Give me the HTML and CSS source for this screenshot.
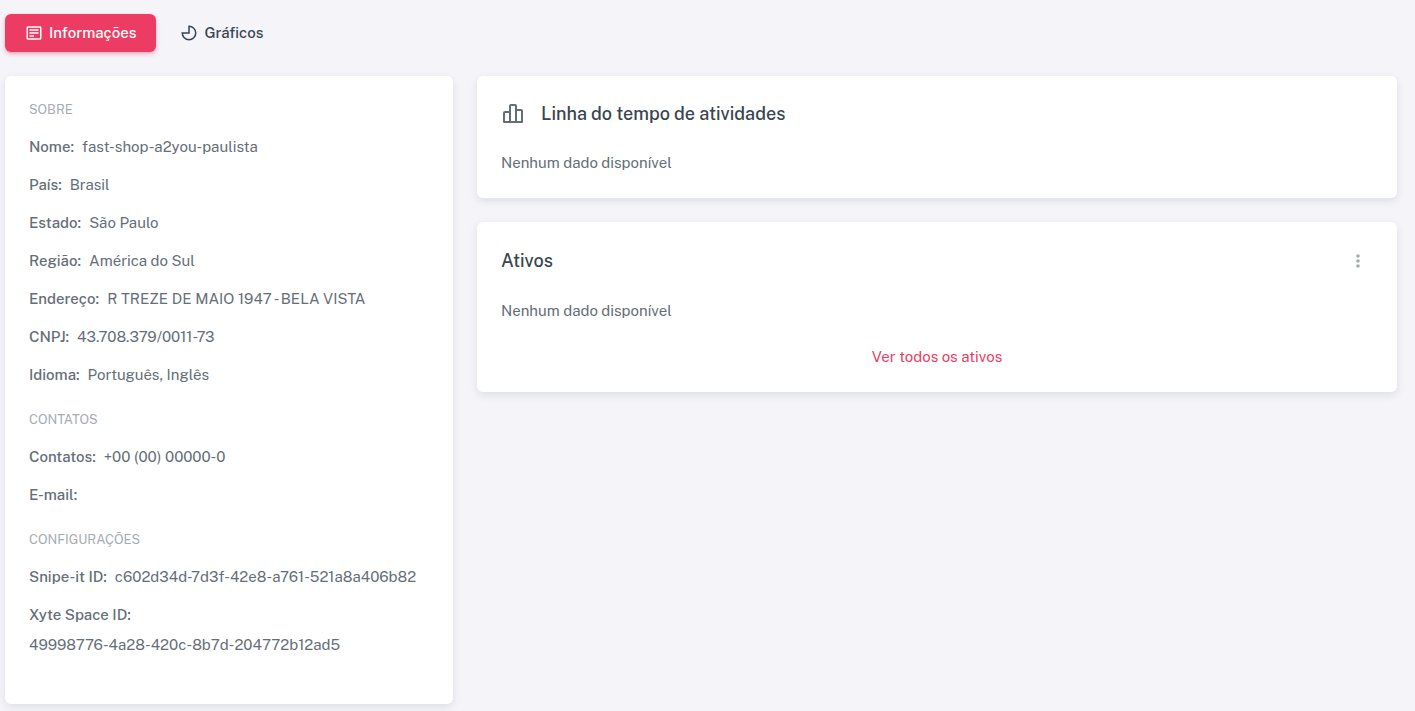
FILE: index.html
```
<!DOCTYPE html>
<html lang="pt-BR">
<head>
    <meta charset="UTF-8">
    <meta name="viewport" content="width=device-width, initial-scale=1.0">
    <title>fast-shop-a2you-paulista</title>
    <link rel="stylesheet" href="styles.css">
</head>

<body>
    <nav class="tabs">
        <button type="button" class="tab active">
            <svg class="tab-icon" viewBox="0 0 24 24" fill="currentColor">
                <path d="M20 3H4c-1.1 0-2 .9-2 2v14c0 1.1.9 2 2 2h16c1.1 0 2-.9 2-2V5c0-1.1-.9-2-2-2zM4 19V5h16v14H4z"/>
                <path d="M6 7h12v2H6zM6 11h12v2H6zM6 15h6v2H6z"/>
            </svg>
            Informações
        </button>
        <button type="button" class="tab">
            <svg class="tab-icon" viewBox="0 0 24 24" fill="none" stroke="currentColor" stroke-width="2">
                <path d="M12 3v9H3a9 9 0 1 0 9-9z"/>
            </svg>
            Gráficos
        </button>
    </nav>

    <main class="content">
        <section class="card">
            <h2 class="label">Sobre</h2>
            <ul class="info">
                <li><span class="key">Nome:</span><span>fast-shop-a2you-paulista</span></li>
                <li><span class="key">País:</span><span>Brasil</span></li>
                <li><span class="key">Estado:</span><span>São Paulo</span></li>
                <li><span class="key">Região:</span><span>América do Sul</span></li>
                <li><span class="key">Endereço:</span><span>R TREZE DE MAIO 1947 - BELA VISTA</span></li>
                <li><span class="key">CNPJ:</span><span>43.708.379/0011-73</span></li>
                <li><span class="key">Idioma:</span><span>Português, Inglês</span></li>
            </ul>
            <h2 class="label">Contatos</h2>
            <ul class="info">
                <li><span class="key">Contatos:</span><span>+00 (00) 00000-0</span></li>
                <li><span class="key">E-mail:</span></li>
            </ul>
            <h2 class="label">Configurações</h2>
            <ul class="info">
                <li><span class="key">Snipe-it ID:</span><span>c602d34d-7d3f-42e8-a761-521a8a406b82</span></li>
                <li><span class="key">Xyte Space ID:</span><span>49998776-4a28-420c-8b7d-204772b12ad5</span></li>
            </ul>
        </section>

        <div class="column">
            <section class="card">
                <header class="card-header">
                    <svg class="title-icon" viewBox="0 0 24 24" fill="none" stroke="currentColor" stroke-width="2" stroke-linejoin="round">
                        <path d="M9 20V4a1 1 0 0 1 1-1h4a1 1 0 0 1 1 1v16M9 10H4a1 1 0 0 0-1 1v9h18V9a1 1 0 0 0-1-1h-5"/>
                    </svg>
                    <h1 class="title">Linha do tempo de atividades</h1>
                </header>
                <p>Nenhum dado disponível</p>
            </section>

            <section class="card">
                <header class="card-header assets">
                    <h1 class="title">Ativos</h1>
                    <button type="button" class="more" aria-label="Mais opções">
                        <svg class="more-icon" viewBox="0 0 24 24" fill="currentColor">
                            <circle cx="12" cy="6" r="2.2"/>
                            <circle cx="12" cy="12" r="2.2"/>
                            <circle cx="12" cy="18" r="2.2"/>
                        </svg>
                    </button>
                </header>
                <p>Nenhum dado disponível</p>
                <a class="see-all" href="#">Ver todos os ativos</a>
            </section>
        </div>
    </main>
</body>

</html>
```
FILE: styles.css
```
:root {
    --primary: #ed3c63;
    --heading: #384551;
    --text:    #646e78;
    --muted:   #a7acb2;
    --bg:      #f4f4f9;
}

* {
    box-sizing: border-box;
}

body {
    margin: 0;
    padding: 14px 18px 7px 5px;
    background-color: var(--bg);
    color: var(--text);
    font-family: "Public Sans", Inter, sans-serif;
    font-size: 15px;
    line-height: 22px;
}

h1, h2, p, ul {
    margin: 0;
    padding: 0;
}

.tabs {
    display: flex;
    gap: 4px;
    margin-bottom: 24px;
}

.tab {
    display: flex;
    align-items: center;
    gap: 6px;
    padding: 8px 20px;
    border: none;
    border-radius: 6px;
    background: none;
    color: var(--heading);
    font: inherit;
    font-weight: 500;
    cursor: pointer;
}

.tab.active {
    background-color: var(--primary);
    color: white;
    box-shadow: 0 2px 4px rgba(237, 60, 99, 0.4);
}

.tab-icon {
    width: 18px;
    height: 18px;
}

.content {
    display: grid;
    grid-template-columns: repeat(3, minmax(0, 1fr));
    gap: 24px;
    align-items: start;
}

.column {
    grid-column: span 2;
    display: flex;
    flex-direction: column;
    gap: 24px;
}

.card {
    padding: 24px;
    border-radius: 6px;
    background-color: white;
    box-shadow: 0 3px 8px rgba(34, 48, 62, 0.1);
}

.label {
    margin-bottom: 16px;
    color: var(--muted);
    font-size: 13px;
    font-weight: 400;
    line-height: 20px;
    text-transform: uppercase;
}

.info {
    display: flex;
    flex-direction: column;
    gap: 16px;
    margin-bottom: 24px;
    list-style: none;
}

.info li {
    display: flex;
    flex-wrap: wrap;
    gap: 8px;
}

.key {
    font-weight: 500;
}

.card-header {
    display: flex;
    align-items: center;
    gap: 16px;
    margin-bottom: 24px;
}

.assets {
    justify-content: space-between;
}

.title {
    color: var(--heading);
    font-size: 18px;
    font-weight: 500;
    line-height: 28px;
}

.title-icon {
    width: 24px;
    height: 24px;
}

.more {
    display: flex;
    align-items: center;
    justify-content: center;
    width: 30px;
    height: 30px;
    padding: 0;
    border: none;
    background: none;
    color: var(--muted);
    cursor: pointer;
}

.more-icon {
    width: 20px;
    height: 20px;
}

.see-all {
    display: block;
    width: fit-content;
    margin: 24px auto 0;
    color: var(--primary);
    text-decoration: none;
}
```
